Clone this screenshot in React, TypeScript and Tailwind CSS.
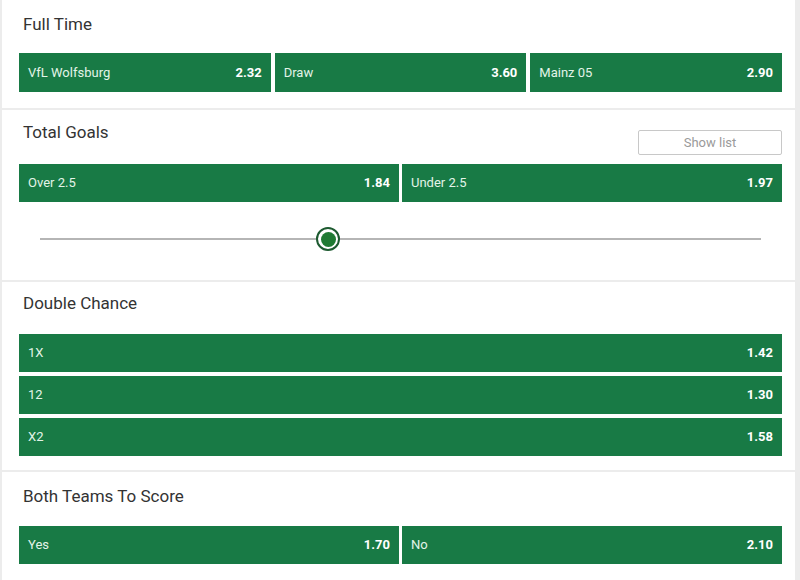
import React from 'react';

type Odd = { label: string; price: string };

const OddButton: React.FC<{ odd: Odd; className?: string }> = ({ odd, className = '' }) => (
  <button
    className={`flex items-center justify-between bg-[#187a45] px-[9px] text-[13px] ${className}`}
  >
    <span className="text-[#e3f4e8]">{odd.label}</span>
    <span className="font-bold text-white">{odd.price}</span>
  </button>
);

const Title: React.FC<{ children: React.ReactNode }> = ({ children }) => (
  <h3 className="text-[17px] leading-[20px] text-[#333333]">{children}</h3>
);

export default function App() {
  const fullTime: Odd[] = [
    { label: 'VfL Wolfsburg', price: '2.32' },
    { label: 'Draw', price: '3.60' },
    { label: 'Mainz 05', price: '2.90' },
  ];
  const totalGoals: Odd[] = [
    { label: 'Over 2.5', price: '1.84' },
    { label: 'Under 2.5', price: '1.97' },
  ];
  const doubleChance: Odd[] = [
    { label: '1X', price: '1.42' },
    { label: '12', price: '1.30' },
    { label: 'X2', price: '1.58' },
  ];
  const btts: Odd[] = [
    { label: 'Yes', price: '1.70' },
    { label: 'No', price: '2.10' },
  ];

  const thumb = 40; // percent along the track

  return (
    <div
      className="min-h-[580px] w-[800px] bg-[#ececec] pl-[2px] pr-[5px]"
      style={{ fontFamily: 'Roboto, "Liberation Sans", sans-serif' }}
    >
      {/* Full Time */}
      <section className="mb-[2px] bg-white pb-[16px] pl-[17px] pr-[13px] pt-[14px]">
        <div className="pl-[4px]">
          <Title>Full Time</Title>
        </div>
        <div className="mt-[19px] grid grid-cols-3 gap-[4px]">
          {fullTime.map((o) => (
            <OddButton key={o.label} odd={o} className="h-[39px]" />
          ))}
        </div>
      </section>

      {/* Total Goals */}
      <section className="mb-[2px] bg-white pb-[4px] pl-[17px] pr-[13px] pt-[12px]">
        <div className="flex items-start justify-between">
          <div className="pl-[4px]">
            <Title>Total Goals</Title>
          </div>
          <button className="mt-[8px] h-[25px] w-[144px] rounded-[2px] border border-[#c8c8c8] bg-white text-[13px] text-[#9a9a9a]">
            Show list
          </button>
        </div>
        <div className="mt-[9px] grid grid-cols-2 gap-[3px]">
          {totalGoals.map((o) => (
            <OddButton key={o.label} odd={o} className="h-[38px]" />
          ))}
        </div>
        <div className="flex h-[74px] items-center px-[21px]">
          <div className="relative h-[2px] w-full bg-[#b5b5b5]">
            <div
              className="absolute top-1/2 flex h-[24px] w-[24px] -translate-x-1/2 -translate-y-1/2 items-center justify-center rounded-full border-[2px] border-[#1d5a30] bg-white"
              style={{ left: `${thumb}%` }}
            >
              <div className="h-[15px] w-[15px] rounded-full bg-[#1f7a33]" />
            </div>
          </div>
        </div>
      </section>

      {/* Double Chance */}
      <section className="mb-[2px] bg-white pb-[14px] pl-[17px] pr-[13px] pt-[11px]">
        <div className="pl-[4px]">
          <Title>Double Chance</Title>
        </div>
        <div className="mt-[21px] flex flex-col gap-[4px]">
          {doubleChance.map((o) => (
            <OddButton key={o.label} odd={o} className="h-[38px] w-full" />
          ))}
        </div>
      </section>

      {/* Both Teams To Score */}
      <section className="bg-white pb-[16px] pl-[17px] pr-[13px] pt-[14px]">
        <div className="pl-[4px]">
          <Title>Both Teams To Score</Title>
        </div>
        <div className="mt-[20px] grid grid-cols-2 gap-[3px]">
          {btts.map((o) => (
            <OddButton key={o.label} odd={o} className="h-[38px]" />
          ))}
        </div>
      </section>
    </div>
  );
}
